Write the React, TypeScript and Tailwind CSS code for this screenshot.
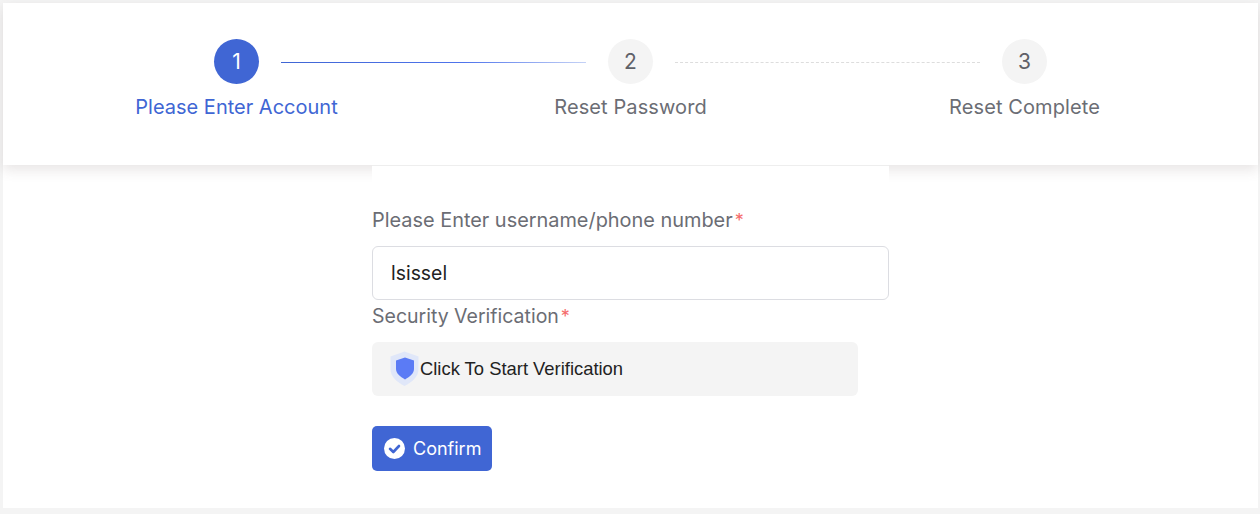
import React from "react";

const font = "font-['Inter','Liberation_Sans',sans-serif]";

function StepDot({ n, active }: { n: number; active?: boolean }) {
  return (
    <div
      className={`w-[45px] h-[45px] rounded-full flex items-center justify-center text-[21px] shrink-0 ${
        active ? "bg-[#4066d4] text-white" : "bg-[#f4f4f4] text-[#5f6168]"
      }`}
    >
      {n}
    </div>
  );
}

function Label({ text, size }: { text: string; size: string }) {
  return (
    <div className={`${size} h-[24px] leading-[24px] text-[#6b6d74]`}>
      {text}
      <span className="text-[#f56c6c] text-[18px] ml-[2px]">*</span>
    </div>
  );
}

export default function App() {
  return (
    <div className={`w-full h-[514px] bg-[#f4f4f4] pt-[3px] pl-[3px] pr-[2px] pb-[6px] overflow-hidden ${font}`}>
      <div className="h-full bg-white flex flex-col">
        {/* Steps header */}
        <div className="h-[162px] pt-[36px] shadow-[0_5px_12px_rgba(90,70,70,0.14)] flex flex-col items-center">
          <div className="flex items-center">
            <StepDot n={1} active />
            <div className="w-[305px] h-px mt-[1px] mx-[22px] bg-[linear-gradient(to_right,#4066d4,#4f74ec_60%,#c5d2f6)]" />
            <StepDot n={2} />
            <div className="w-[305px] mt-[1px] mx-[22px] border-t border-dashed border-[#dddddd]" />
            <StepDot n={3} />
          </div>
          <div className="grid grid-cols-[394px_394px_394px] mt-[10px] text-[20px] leading-[26px] text-center text-[#6b6d74]">
            <div className="text-[#4066d4]">Please Enter Account</div>
            <div className="tracking-[0.1px]">Reset Password</div>
            <div className="tracking-[0.1px]">Reset Complete</div>
          </div>
        </div>

        {/* Form */}
        <div className="relative w-[517px] ml-[369px] flex-1 bg-white border-t border-[#eeeeee] pt-[42px]">
          <Label text="Please Enter username/phone number" size="text-[19.9px]" />
          <div className="mt-[14px] h-[54px] rounded-[6px] border border-[#dcdde2] pl-[18px] pt-[2px] flex items-center text-[19.4px] text-[#222222]">
            lsissel
          </div>
          <div className="mt-[4px]">
            <Label text="Security Verification" size="text-[19.5px]" />
          </div>
          <div className="mt-[14px] w-[486px] h-[54px] rounded-[6px] bg-[#f4f4f4] pl-[17px] flex items-center font-['Liberation_Sans',sans-serif] text-[18.4px] text-[#222222]">
            <svg width="31" height="36" viewBox="0 0 31 36" className="shrink-0 blur-[0.5px]">
              <path d="M15.5 0.5 L29.5 5.5 V18 C29.5 26 23 31 15.5 35 C8 31 1.5 26 1.5 18 V5.5 Z" fill="#e0e7f9" />
              <path d="M16 6.5 L25 9.5 V18 C25 22.5 21 25.5 16 28.5 C11 25.5 7 22.5 7 18 V9.5 Z" fill="#5b7bf5" />
            </svg>
            <span>Click To Start Verification</span>
          </div>
          <button className="mt-[30px] w-[120px] h-[45px] rounded-[5px] bg-[#4066d4] flex items-center pl-[12px] gap-[8px] text-white text-[18px]">
            <svg width="21" height="21" viewBox="0 0 21 21">
              <circle cx="10.5" cy="10.5" r="10.5" fill="#ffffff" />
              <path d="M6 10.8 L9.3 14 L15 8" fill="none" stroke="#4066d4" strokeWidth="2.6" strokeLinecap="round" strokeLinejoin="round" />
            </svg>
            Confirm
          </button>
        </div>
      </div>
    </div>
  );
}
